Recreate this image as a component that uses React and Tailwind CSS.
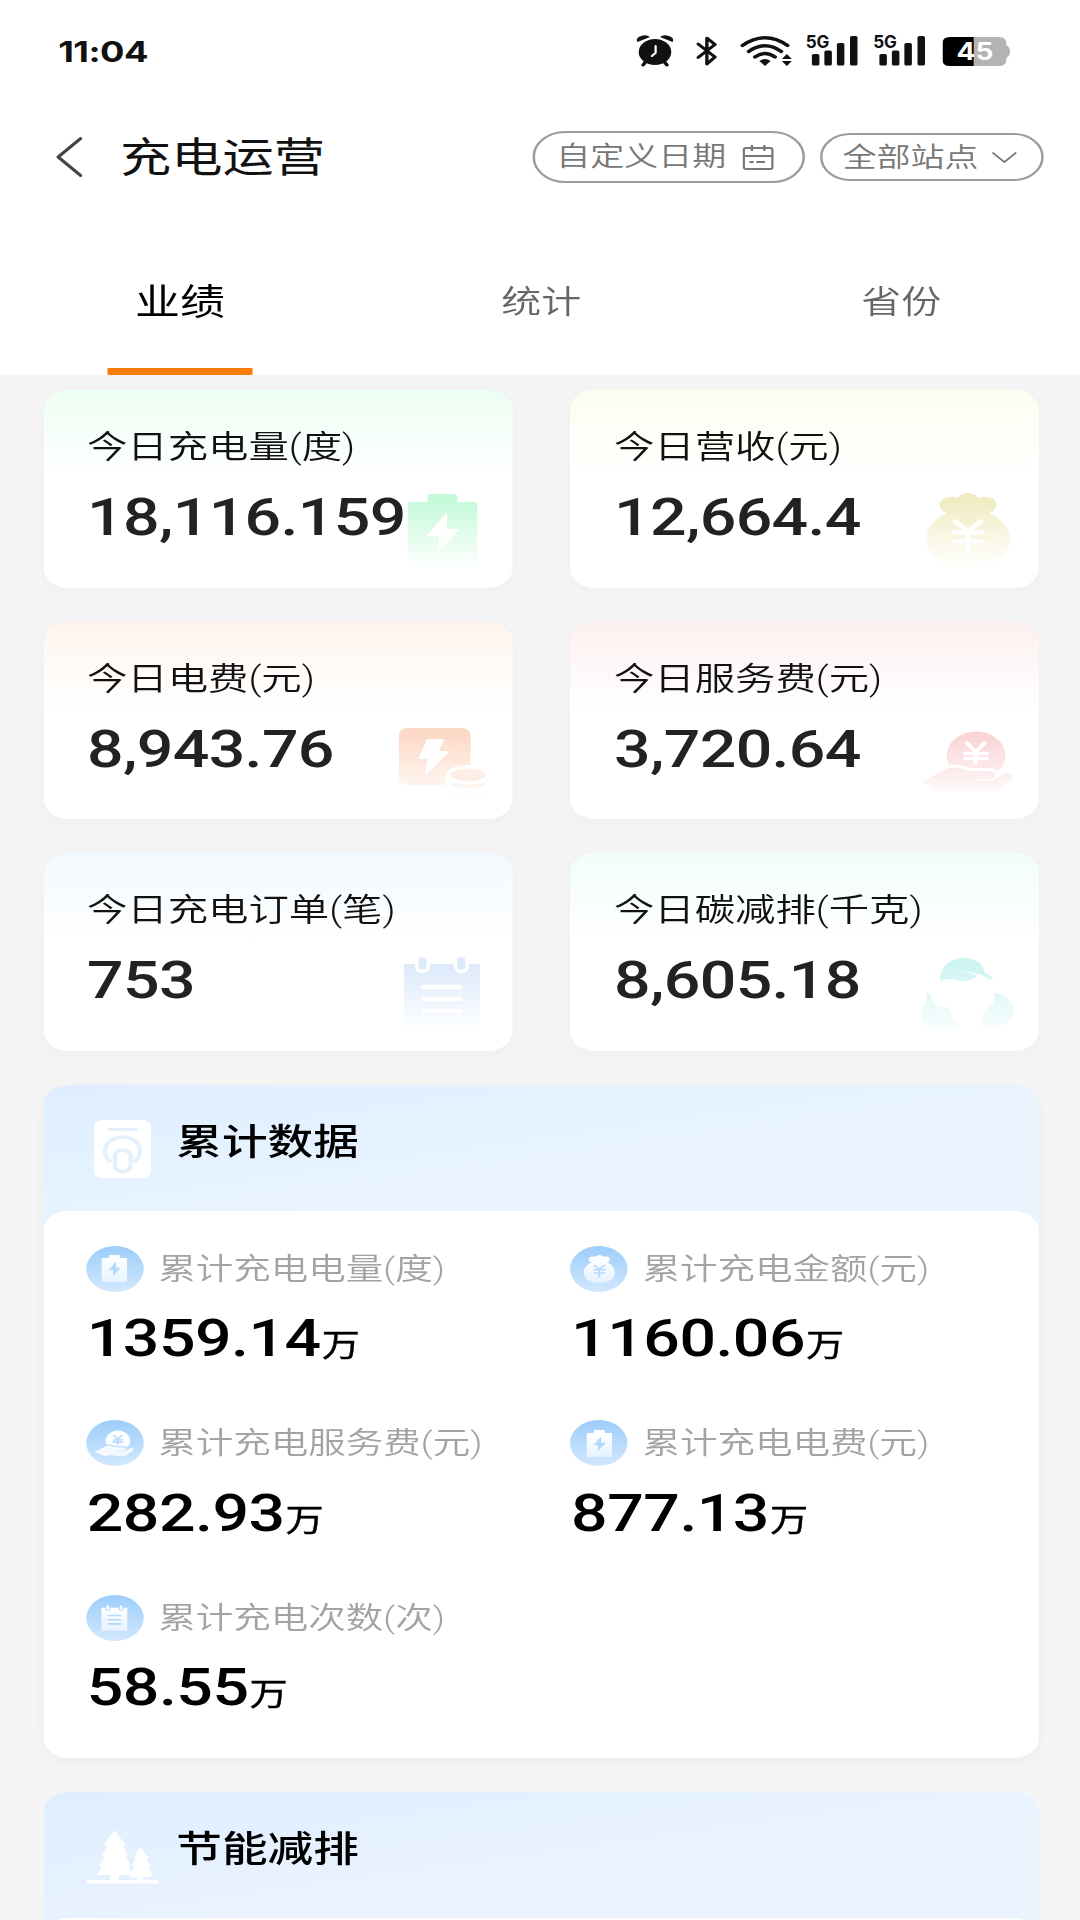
import { useState } from 'react'

const TABS = ['业绩', '统计', '省份']

const TODAY = [
  { label: '今日充电量(度)',   value: '18,116.159', tint: 'from-[#edfef3]', icon: <BatteryIcon id="t1" from="#c6f9da" to="#fcfffd" />, box: 'right-[28px] bottom-[19.500px] w-[56px] h-[74px]' },
  { label: '今日营收(元)',     value: '12,664.4',   tint: 'from-[#fdfdf2]', icon: <BagIcon id="t2" from="#f1ebc2" to="#fffffd" />, box: 'right-[23px] bottom-[19.500px] w-[67px] h-[75px]' },
  { label: '今日电费(元)',     value: '8,943.76',   tint: 'from-[#fff5ee]', icon: <FeeIcon id="t3" from="#fddac7" to="#fffdfb" />, box: 'right-[21px] bottom-[22px] w-[70px] h-[69px]' },
  { label: '今日服务费(元)',   value: '3,720.64',   tint: 'from-[#fdf0f0]', icon: <HandIcon id="t4" from="#fad5d7" to="#ffffff" />, box: 'right-[20px] bottom-[26.500px] w-[74px] h-[64px]' },
  { label: '今日充电订单(笔)', value: '753',        tint: 'from-[#f2f9fe]', icon: <OrderIcon id="t5" from="#dceafb" to="#fdfeff" />, box: 'right-[26px] bottom-[19.500px] w-[61px] h-[74px]' },
  { label: '今日碳减排(千克)', value: '8,605.18',   tint: 'from-[#f1fdfa]', icon: <LeafIcon id="t6" from="#cef4f1" to="#fafefe" />, box: 'right-[20px] bottom-[20px] w-[74px] h-[73px]' },
]

const TOTALS = [
  { label: '累计充电电量(度)',   value: '1359.14', icon: <BatteryIcon id="c1" from="#ffffff" to="#e6f3ff" cut="#b4d9fb" />, size: 'w-[21px] h-[27px]' },
  { label: '累计充电金额(元)',   value: '1160.06', icon: <BagIcon id="c2" from="#ffffff" to="#e6f3ff" cut="#b4d9fb" />, size: 'w-[25px] h-[28px]' },
  { label: '累计充电服务费(元)', value: '282.93',  icon: <HandIcon id="c3" from="#ffffff" to="#eef7ff" cut="#b4d9fb" />, size: 'w-[31px] h-[28px]' },
  { label: '累计充电电费(元)',   value: '877.13',  icon: <BatteryIcon id="c4" from="#ffffff" to="#e6f3ff" cut="#b4d9fb" />, size: 'w-[21px] h-[27px]' },
  { label: '累计充电次数(次)',   value: '58.55',   icon: <OrderIcon id="c5" from="#ffffff" to="#e6f3ff" cut="#b4d9fb" />, size: 'w-[21px] h-[26px]' },
]

function Fade({ id, from, to }) {
  return (
    <defs>
      <linearGradient id={id} gradientUnits="userSpaceOnUse" x1="0" y1="0" x2="0" y2="72">
        <stop offset="0" stopColor={from} />
        <stop offset="0.1" stopColor={from} />
        <stop offset="1" stopColor={to} />
      </linearGradient>
    </defs>
  )
}

function BatteryIcon({ id, from, to, cut = '#fff' }) {
  return (
    <svg viewBox="0 0 56 74" className="w-full h-full">
      <Fade id={id} from={from} to={to} />
      <path d="M19 0h18q3 0 3 3v5h13q3 0 3 3v60q0 3-3 3H3q-3 0-3-3V11q0-3 3-3h13V3q0-3 3-3z" fill={`url(#${id})`} />
      <path d="M31.7 18L15 42h10v16l17-23H31.7z" fill={cut} />
    </svg>
  )
}

function BagIcon({ id, from, to, cut = '#fff' }) {
  return (
    <svg viewBox="0 0 67 75" className="w-full h-full">
      <Fade id={id} from={from} to={to} />
      <path d="M17 20C8 18 8 4 20 4q3 0 5 1 8-10 17 0 3-1 6-1c11 0 10 14 2 16 10 5 17 15 17 27C67 63 53 75 33.500 75S0 63 0 46c0-12 7-21 17-26z" fill={`url(#${id})`} />
      <path d="M23 28l10.500 10.500L44 28M33.500 38.500V59M22.500 39.500h22M22.500 48.500h22" fill="none" stroke={cut} strokeWidth="4" strokeLinecap="round" />
    </svg>
  )
}

function FeeIcon({ id, from, to }) {
  return (
    <svg viewBox="0 0 70 69" className="w-full h-full">
      <Fade id={id} from={from} to={to} />
      <rect width="57.500" height="57" rx="7" fill={`url(#${id})`} />
      <path d="M23.500 11H35q1.500 0 1 1.500L32 23h7q1.500 0 .5 1.500L22.500 46q-2 2-1.500-1l2-14h-6q-1.500 0-1-1.500l6-17q.5-1.500 1.500-1.500z" fill="#fff" />
      <path d="M37.500 48c0-7 8-11 18-11s16 4 16 11v21h-34z" fill="#fff" />
      <ellipse cx="55.500" cy="47" rx="14" ry="6.500" fill="#fdeee6" />
      <path d="M41.500 53c5 5 23 5 28 0v3c-5 5-23 5-28 0z" fill="#fef5f0" />
      <path d="M41.500 62c5 5 23 5 28 0v3c-5 5-23 5-28 0z" fill="#fffbf9" />
    </svg>
  )
}

function HandIcon({ id, from, to, cut = '#fff' }) {
  return (
    <svg viewBox="0 0 74 64" className="w-full h-full">
      <Fade id={id} from={from} to={to} />
      <path d="M22 36A23.500 24.500 0 1 1 65 37.500Q63 41 60 42q-2-3-6-3H39l-9-3q-4-1-8 0z" fill={`url(#${id})`} />
      <path d="M36.500 14l7 9 7-9M43.500 23v11M35 24.500h17.500M35 29.500h17.500" fill="none" stroke={cut} strokeWidth="3.500" strokeLinecap="round" />
      <path d="M0 53l20-13q5-2 10-1l8 3h17q5 1 4 5-1 3-5 3H43v1.500h14l8-6q5-3 9 1 0 3-14 15-3 2-8 2l-20-2q-6-1-13 2-3 0-6-3z" fill={`url(#${id})`} />
    </svg>
  )
}

function OrderIcon({ id, from, to, cut = '#fff' }) {
  return (
    <svg viewBox="0 0 61 74" className="w-full h-full">
      <Fade id={id} from={from} to={to} />
      <path d="M2.500 7H9v3q1 6 6 6t6-6V7h19v3q1 6 6 6t6-6V7h6.500Q61 7 61 9.500V74H0V9.500Q0 7 2.500 7z" fill={`url(#${id})`} />
      <path d="M15 3.500v6M46 3.500v6" stroke={from} strokeWidth="6.500" strokeLinecap="round" />
      <path d="M16.500 30h28M16.500 42h28M16.500 54h28" stroke={cut} strokeWidth="4.500" strokeLinecap="round" />
    </svg>
  )
}

function LeafIcon({ id, from, to }) {
  return (
    <svg viewBox="0 0 74 73" className="w-full h-full">
      <Fade id={id} from={from} to={to} />
      <g fill={`url(#${id})`}>
        <path d="M15.500 24C14 9 23 0 34 0c8 0 14 4 16 11 0 2 1 4 7.500 8l-2 3-7-5C43 15 37 13.500 30 13c7 1 12 3 15 5-4 5-12 6.500-17 4-4-2-8-2-12.500 2z" />
        <path d="M58 34c10 3 17 12 16 21-1 8-6 13-14 14l-16 2 6-4c-3-7-1-14 4-18 4-4 6-8 4-15z" />
        <path d="M4 35l4 1c0 5 1 8 4 11l3 11c-1-4-1-7 0-9 5-1 8 2 9 6 1 5 3 9 7 11C26 70 21 72 15 72 5 72-1 63 0 55c0-5 2-8 4-10z" />
      </g>
    </svg>
  )
}

function Signal() {
  return (
    <svg viewBox="0 0 42 36" className="w-[42px] h-[36px] -mt-[4px] overflow-visible">
      <text x="-0.500" y="17" fontSize="17.500" fontWeight="700" fontFamily="Inter, sans-serif" textLength="19" lengthAdjust="spacingAndGlyphs" fill="#111">5G</text>
      <g fill="#111">
        <rect x="4.500" y="23" width="6" height="11.500" rx="1.500" />
        <rect x="14.500" y="19.500" width="6" height="15" rx="1.500" />
        <rect x="24.500" y="12" width="6" height="22.500" rx="1.500" />
        <rect x="35" y="5" width="6" height="29.500" rx="1.500" />
      </g>
    </svg>
  )
}

function StatusBar() {
  return (
    <div className="h-[102px] flex items-center justify-between pl-[46.500px] pr-[56px] text-[#111]">
      <span className="font-[Inter] font-bold text-[29px] leading-none tracking-[-0.400px]">11:04</span>
      <div className="flex items-center">
        {/* Alarm */}
        <svg viewBox="0 0 30 32" className="w-[30px] h-[32px]">
          <path d="M1 7q-2-4 3-6 4-2 7 1zM29 7q2-4-3-6-4-2-7 1z" fill="#111" />
          <path d="M8 26l-2.500 4M22 26l2.500 4" stroke="#111" strokeWidth="3" strokeLinecap="round" />
          <circle cx="15" cy="17" r="13" fill="#111" />
          <path d="M15.500 11v7l-3 3" fill="none" stroke="#fff" strokeWidth="1.800" strokeLinecap="round" />
        </svg>
        {/* Bluetooth */}
        <svg viewBox="0 0 17 32" className="w-[17px] h-[32px] ml-[18px]">
          <path d="M1.500 9L15 22 8.500 29V3L15 9.500 1.500 22.500" fill="none" stroke="#111" strokeWidth="2.700" strokeLinejoin="round" strokeLinecap="round" />
        </svg>
        {/* Wifi */}
        <svg viewBox="0 0 42 32" className="w-[42px] h-[32px] ml-[18px]">
          <g fill="none" stroke="#111" strokeWidth="3.200" strokeLinecap="round">
            <path d="M2 10.500Q20 -5 38 10.500" />
            <path d="M7 16.500Q20 5 33 16.500" />
            <path d="M12 22Q20 15 28 22" />
          </g>
          <path d="M15.500 26q4.500-4 9 0L20 31z" fill="#111" />
          <path d="M33.500 24l4-5 4 5zM33.500 26l4 5 4-5z" fill="#111" />
        </svg>
        <div className="flex gap-[12px] ml-[11px]">
          <Signal />
          <Signal />
        </div>
        {/* Battery level */}
        <svg viewBox="0 0 54 29" className="w-[54px] h-[29px] ml-[13px]">
          <path d="M25 0h20q6 0 6 6v2q3 2 3 6.500T51 21v2q0 6-6 6H25z" fill="#b3b3b3" />
          <path d="M6 0h19v29H6q-6 0-6-6V6q0-6 6-6z" fill="#000" />
          <text x="26" y="23.500" fontSize="24" fontWeight="700" fontFamily="Inter, sans-serif" textAnchor="middle" textLength="29.500" lengthAdjust="spacingAndGlyphs" fill="#fff">45</text>
        </svg>
      </div>
    </div>
  )
}

function Header() {
  return (
    <div className="h-[110px] flex items-center pl-[45px] pr-[29px]">
      <svg viewBox="0 0 21 40" className="w-[21px] h-[40px]">
        <path d="M19.500 1.500L1.500 20l18 18.500" fill="none" stroke="#444" strokeWidth="2.800" strokeLinecap="round" strokeLinejoin="round" />
      </svg>
      <h1 className="ml-[30px] mt-[2.500px] text-[41px] leading-[44px] text-[#111] whitespace-nowrap">充电运营</h1>
      <div className="ml-auto flex items-center gap-[12px] text-[27.200px] font-[350] text-[#777]">
        <button className="h-[52px] w-[218px] flex items-center pl-[17px] border-2 border-[#9c9c9c] rounded-full">
          <span className="leading-[30px] -mt-[1px] whitespace-nowrap">自定义日期</span>
          <svg viewBox="0 0 25 26" className="w-[25px] h-[26px] ml-[13px]" fill="none" stroke="#777" strokeWidth="1.900">
            <rect x="1" y="4" width="23" height="21" rx="2" />
            <path d="M1 12h23M7.500 1v6M17.500 1v6M5.500 18H9M11 18h7" />
          </svg>
        </button>
        <button className="h-[48px] w-[179px] flex items-center pl-[16px] border-2 border-[#9c9c9c] rounded-full">
          <span className="leading-[30px] mt-[2px] whitespace-nowrap">全部站点</span>
          <svg viewBox="0 0 21 13" className="w-[21px] h-[13px] ml-[10px]">
            <path d="M1 1.500l9.500 9.500L20 1.500" fill="none" stroke="#777" strokeWidth="1.700" />
          </svg>
        </button>
      </div>
    </div>
  )
}

function TabBar() {
  const [active, setActive] = useState(0)

  return (
    <div className="grid grid-cols-3 h-[163px]">
      {TABS.map((tab, i) => (
        <button key={tab} onClick={() => setActive(i)} className="flex flex-col items-center justify-between pt-[69px]">
          <span className={i === active ? 'text-[36px] leading-[45px] text-black' : 'pl-[2px] text-[32px] leading-[42px] font-[350] text-[#666]'}>
            {tab}
          </span>
          {i === active && <span className="w-[116px] h-[7.500px] -ml-[1px] bg-[#fa7d0a]" />}
        </button>
      ))}
    </div>
  )
}

function TodayCard({ label, value, tint, icon, box }) {
  return (
    <div className={`relative h-[197.500px] rounded-[20px] pt-[39px] pl-[35px] bg-linear-to-b ${tint} to-white to-45% shadow-[0_4px_14px_rgba(0,0,0,0.03)]`}>
      <p className="text-[32.300px] leading-[36px] font-[350] text-[#111] whitespace-nowrap">{label}</p>
      <p className="mt-[25px] text-[51.500px] leading-[56px] tracking-[-0.500px] font-medium text-[#222]">{value}</p>
      <div className={`absolute ${box}`}>{icon}</div>
    </div>
  )
}

function TotalItem({ label, value, icon, size }) {
  return (
    <div className="h-[174.500px]">
      <div className="flex items-center gap-[12px]">
        <div className="w-[46px] h-[46px] rounded-full bg-linear-to-b from-[#9ccdfa] to-[#d2e8fd] flex items-center justify-center">
          <div className={size}>{icon}</div>
        </div>
        <span className="text-[30px] leading-[36px] font-[350] text-[#a3a3a3] whitespace-nowrap">{label}</span>
      </div>
      <p className="mt-[19.500px] pl-[0.800px] text-[51.500px] leading-[56px] tracking-[-0.400px] font-medium text-black whitespace-nowrap">
        {value}<span className="ml-[0.800px] text-[30.500px] font-normal [-webkit-text-stroke:0.4px_black]">万</span>
      </p>
    </div>
  )
}

function PanelHeader({ title, children }) {
  return (
    <div className="h-[126px] pl-[34px] pt-[35px] flex">
      <div className="w-[72.500px]">{children}</div>
      <h2 className="mt-[3px] text-[36.500px] leading-[40px] font-medium text-black">{title}</h2>
    </div>
  )
}

export default function App() {
  return (
    <div className="w-[1080px] h-[1920px] overflow-hidden bg-[#f5f5f5]">
      {/* 864px wide layout, widened to fill the screen */}
      <div className="w-[864px] h-[1920px] origin-top-left scale-x-125 overflow-hidden font-[Roboto,'Noto_Sans_CJK_SC',sans-serif]">
        <header className="bg-white">
          <StatusBar />
          <Header />
          <TabBar />
        </header>

        <main className="pl-[34.600px] pr-[32.800px] pt-[15px] flex flex-col gap-[34px]">
          <div className="grid grid-cols-2 gap-x-[46.600px] gap-y-[34px]">
            {TODAY.map((item) => <TodayCard key={item.label} {...item} />)}
          </div>

          {/* Cumulative data */}
          <section className="rounded-[20px] bg-[linear-gradient(170deg,#dfeeff_0px,#e9f4ff_160px)] shadow-[0_4px_14px_rgba(0,0,0,0.04)]">
            <PanelHeader title="累计数据">
              <svg viewBox="0 0 46 58" className="w-[46px] h-[58px] ml-[6px]">
                <rect width="46" height="58" rx="7" fill="#fff" />
                <g fill="none" stroke="#e3f0fe">
                  <path d="M12.500 9.500h21" strokeWidth="3" strokeLinecap="round" />
                  <path d="M14 42Q9 38 9 31A14 14 0 0 1 37 31q0 7-5 11" strokeWidth="3.500" />
                  <rect x="17" y="30" width="12.500" height="21.500" rx="6" strokeWidth="3.500" />
                </g>
              </svg>
            </PanelHeader>
            <div className="h-[547px] rounded-[20px] bg-white pt-[35px] pl-[34px] grid grid-cols-[387.500px_1fr] content-start">
              {TOTALS.map((item) => <TotalItem key={item.label} {...item} />)}
            </div>
          </section>

          {/* Energy saving */}
          <section className="rounded-t-[20px] bg-[linear-gradient(170deg,#dfeeff_0px,#ebf3ff_160px)]">
            <PanelHeader title="节能减排">
              <svg viewBox="0 0 58 54" className="w-[58px] h-[54px] mt-[3px]" fill="#fff">
                <path d="M22.500 0l9 15-2 1 4 9-2 1 4 9-2 1 4 9H26v6h-7v-6H8.500l4-8-2-1 4-9-2-1 4-10-2-1z" />
                <path d="M43 17l7 11-2 1 3.500 7-2 1 3 7-1 3h-6v4h-5v-4h-6l4-10-2-2 3-6-1-2z" />
                <rect y="50" width="58" height="3.500" rx="1.500" />
              </svg>
            </PanelHeader>
            <div className="h-[200px] rounded-t-[20px] bg-white" />
          </section>
        </main>
      </div>
    </div>
  )
}
